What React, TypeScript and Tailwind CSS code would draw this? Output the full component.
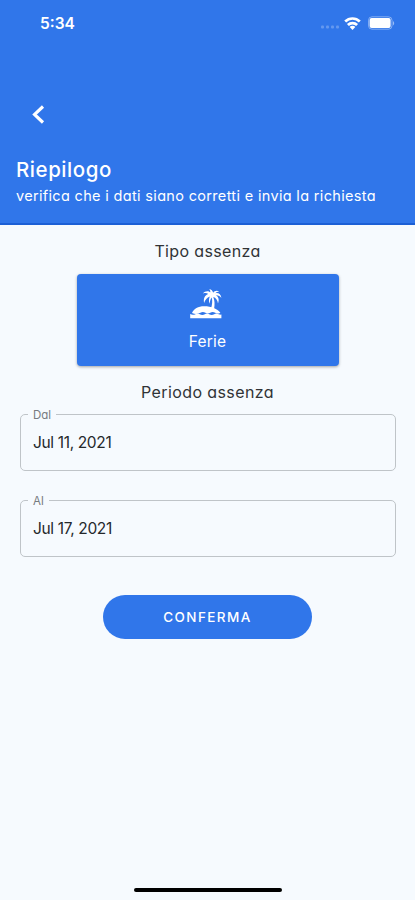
import React from 'react';

type DateField = {
  label: string;
  value: string;
};

const fields: DateField[] = [
  { label: 'Dal', value: 'Jul 11, 2021' },
  { label: 'Al', value: 'Jul 17, 2021' },
];

const StatusBar: React.FC = () => (
  <div className="flex h-[46px] items-center justify-between pl-10 pr-[20px] text-white">
    <span className="pt-px text-[15.5px] leading-5 font-semibold">5:34</span>
    <div className="flex items-center">
      <svg width="20" height="12" viewBox="0 0 20 12" fill="#fff" fillOpacity="0.25">
        <rect x="1" y="8.5" width="3" height="3" rx="1" />
        <rect x="6" y="8.5" width="3" height="3" rx="1" />
        <rect x="11" y="8.5" width="3" height="3" rx="1" />
        <rect x="16" y="8.5" width="3" height="3" rx="1" />
      </svg>
      <svg className="ml-[4px]" width="17" height="13" viewBox="0 0 17 13" fill="none" stroke="#fff" strokeWidth="2.7">
        <path d="M1.2 4.5a10.4 10.4 0 0 1 14.6 0" />
        <path d="M3.9 8a6.4 6.4 0 0 1 9.2 0" />
        <path d="M8.5 12.9 5.7 10.1a3.8 3.8 0 0 1 5.6 0z" fill="#fff" stroke="none" />
      </svg>
      <svg className="ml-[7px]" width="27" height="14" viewBox="0 0 27 14">
        <rect x="0.5" y="0.8" width="23.5" height="12.4" rx="3.5" fill="none" stroke="#fff" strokeOpacity="0.4" />
        <rect x="1.6" y="2.1" width="21" height="9.8" rx="2" fill="#fff" />
        <path d="M25 5v4.4c1.6-.7 1.6-3.7 0-4.4z" fill="#fff" fillOpacity="0.5" />
      </svg>
    </div>
  </div>
);

const IslandIcon: React.FC = () => (
  <svg className="-ml-[3px]" width="34" height="32" viewBox="0 0 34 32" fill="#fff">
    <path d="M21.8 6C20 3.4 16.2 3.6 13.8 6.6c2.6-.8 4.1-.6 5.4.4-3 1.1-5.1 4.2-4.1 9 1-3.4 3-5.6 5.7-6.6-.9 2-1.2 4.9-.2 7.3.3-2.8 1.1-5 2.1-6.2 1 3.6.5 7.6-.8 11.2h3.2c.8-4.2.6-8.4-.8-11.7 2.5.8 4.2 3 4.7 6.5 1.5-3.6.5-7-2.2-8.2 2.3-.2 4.1.6 5.6 2.6-.5-3.7-3.1-5.4-5.9-4.6.8-1.2 2-1.9 3.7-1.9-2.5-1.2-4.8-.4-6 1.3-.5-1.9-1.9-3.3-3.9-3.8.9 1.2 1.2 2.4.9 3.7-1.3-1.1-2.8-1.4-4.6-.9 2.2.4 3.9 1.4 5.2 2.3z" />
    <path d="M3 26c1.7-4.3 6.2-6.8 12.1-6.8 7.5 0 13.1 2.6 16.3 6.5-1.8 1.1-3.6 1.1-5.2.1-1.7-1-3.4-1-5 0-1.6.9-3.2.9-4.8 0-1.7-1-3.4-1-5 0-2.4 1.3-5.4 1.5-8.4.2z" />
    <path d="M1.2 27.1c1.7 1 3.6 1 5.2.1 1.4-.8 3-.8 4.4 0 1.6.9 3.4.9 5 0 1.4-.8 3-.8 4.4 0 1.6.9 3.4.9 5 0 1.4-.8 3-.8 4.4 0 .8.4 1.7.6 2.8.4v3.6H1.2z" />
  </svg>
);

const OutlinedField: React.FC<{ field: DateField }> = ({ field }) => (
  <fieldset className="h-[64px] rounded-[5px] border-[1.5px] border-[#bfc4c8] pl-[7px]">
    <legend className="h-[14px] px-[5px] text-[11.5px] leading-[16px] text-[#777b80]">{field.label}</legend>
    <div className="pt-[11px] pl-[5px] text-[15.5px] leading-[22px] tracking-[-0.35px] text-[#25282b]">{field.value}</div>
  </fieldset>
);

const App: React.FC = () => {
  return (
    <div className="flex h-[900px] w-[415px] flex-col bg-[#f6fafe] font-['Inter','Open_Sans',sans-serif] [font-feature-settings:'cv11']">
      <header className="h-[225px] border-b-2 border-[#1c5fd5] bg-[#3076ea] text-white">
        <StatusBar />
        <div className="flex h-[110px] pt-[58px] pl-[31px]">
          <svg width="14" height="20" viewBox="0 0 14 20" fill="none" stroke="#fff" strokeWidth="3.1">
            <path d="M12 2.5 3.5 10.5 12 18.5" />
          </svg>
        </div>
        <div className="pl-4">
          <h1 className="text-[20.5px] leading-[27px] font-medium tracking-[0.55px]">Riepilogo</h1>
          <p className="text-[14.5px] leading-[25px] tracking-[0.33px] whitespace-nowrap">verifica che i dati siano corretti e invia la richiesta</p>
        </div>
      </header>

      <main className="flex flex-1 flex-col px-5 text-[#303336]">
        <h2 className="pt-[14px] text-center text-[16px] leading-6 tracking-[0.35px]">Tipo assenza</h2>
        <div className="mx-auto mt-[11px] flex h-[92px] w-[262px] flex-col items-center rounded bg-[#3076ea] pt-[13px] text-white shadow-[0_1px_3px_rgba(0,0,0,0.35)]">
          <IslandIcon />
          <span className="mt-[11px] text-[15.5px] leading-6 tracking-[0.2px]">Ferie</span>
        </div>
        <h2 className="pt-[14px] text-center text-[16px] leading-6 tracking-[0.4px]">Periodo assenza</h2>
        <div className="-mr-px mt-[3px] flex flex-col gap-[22px]">
          {fields.map((field) => (
            <OutlinedField key={field.label} field={field} />
          ))}
        </div>
        <button className="mx-auto mt-[38px] h-[44px] w-[209px] rounded-full bg-[#3076ea] text-[13.5px] font-medium tracking-[1.4px] text-white">
          CONFERMA
        </button>
      </main>

      <div className="mx-auto mb-2 h-1 w-[148px] rounded-full bg-black" />
    </div>
  );
};

export default App;
